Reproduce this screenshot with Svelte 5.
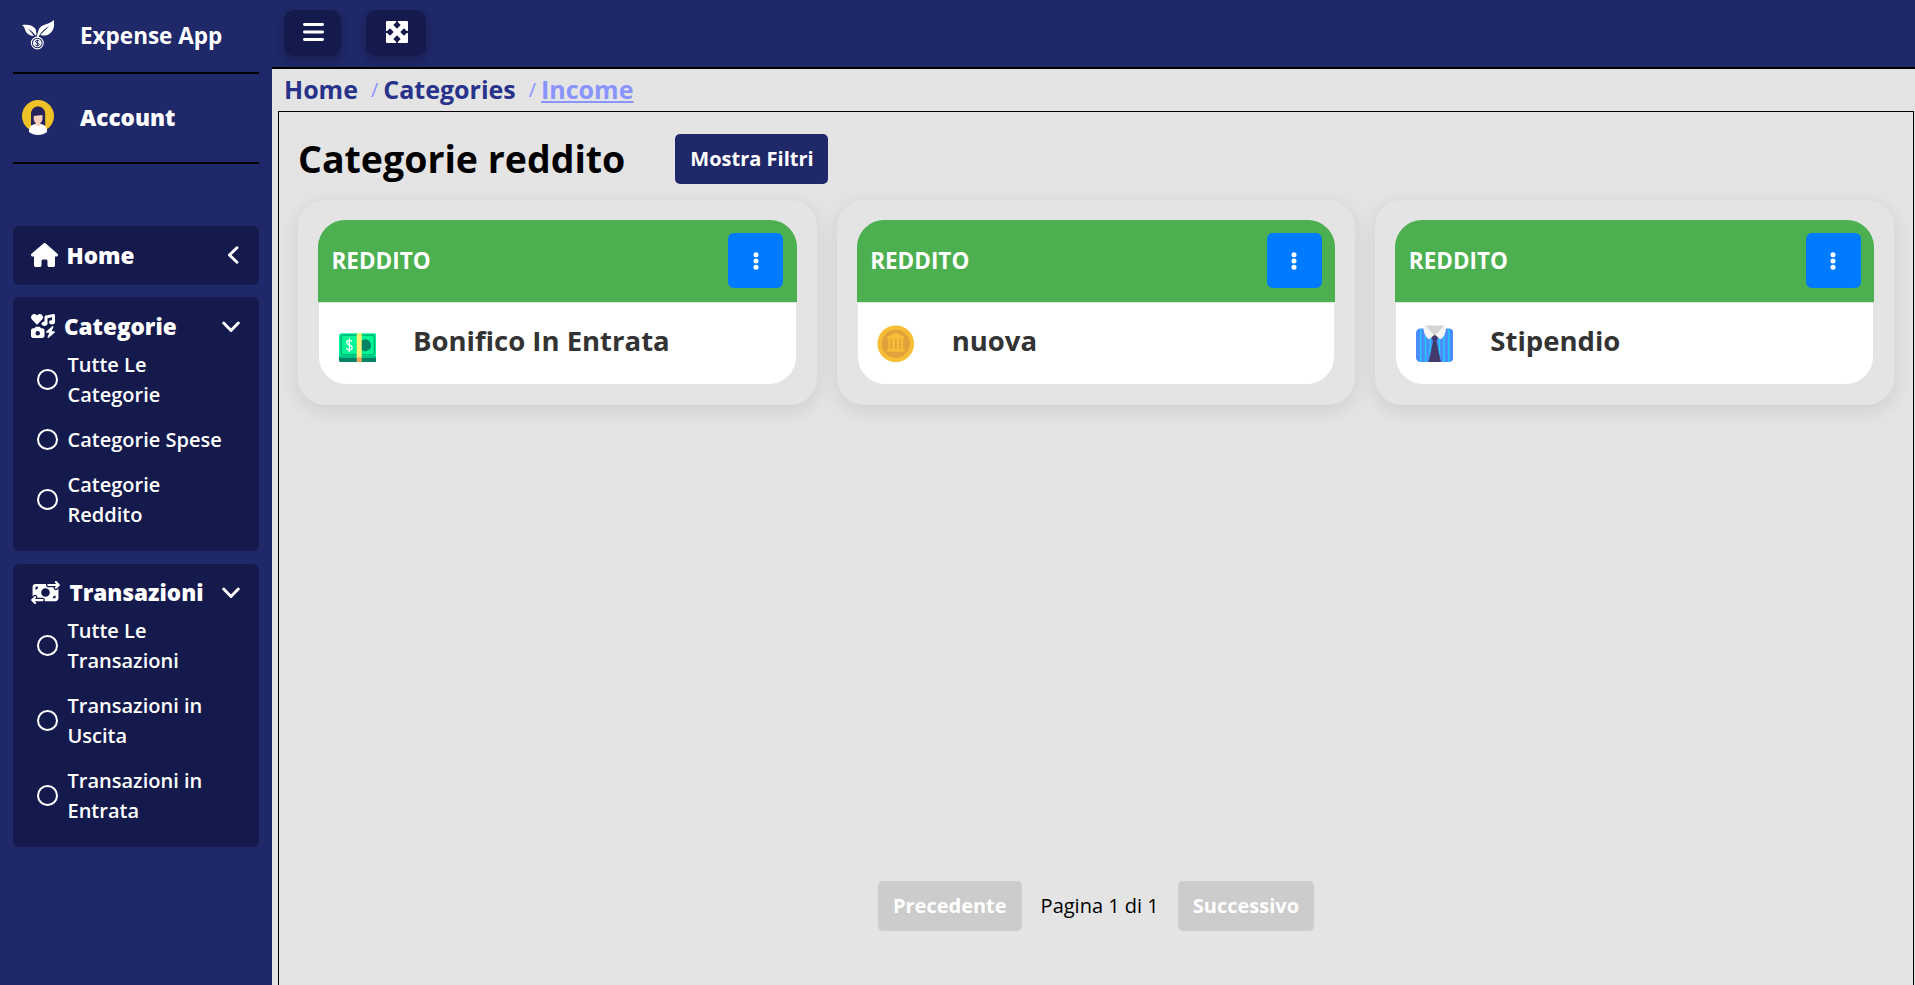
<script>
  const groups = [
    {
      title: 'Categorie',
      icon: 'icons',
      items: ['Tutte Le Categorie', 'Categorie Spese', 'Categorie Reddito']
    },
    {
      title: 'Transazioni',
      icon: 'transfer',
      items: ['Tutte Le Transazioni', 'Transazioni in Uscita', 'Transazioni in Entrata']
    }
  ];

  const cards = [
    { type: 'REDDITO', name: 'Bonifico In Entrata', icon: 'cash' },
    { type: 'REDDITO', name: 'nuova', icon: 'coin' },
    { type: 'REDDITO', name: 'Stipendio', icon: 'shirt' }
  ];
</script>

<div class="app">
  <aside class="sidebar">
    <div class="brand">
      <svg class="logo" viewBox="0 0 32 30">
        <path fill="#fff" d="M0 5C6 4 11 5 13.500 9C14.300 11 14.400 13 14.600 15L13.400 15.600C12 13 9 10.500 5.500 8.500C8 11 10 13 12 16C7 16 4 13 3 9.500C2.500 7.500 1.500 6 0 5Z" />
        <path fill="#fff" d="M32 0C33 8 30 14.500 23 15.500C21 15.800 19.500 15.500 18.500 15C21 12 24 9.500 27.500 6C23 8.500 19 12 16.300 17H14.700C15.500 14 16 11.500 17 9C19 4.500 27 4.500 32 0Z" />
        <circle cx="15.300" cy="23" r="5.900" fill="none" stroke="#fff" stroke-width="1.100" />
        <circle cx="15.300" cy="23" r="4.300" fill="#fff" />
        <path d="M17.300 21.200C16.300 20.100 13.400 20.200 13.400 21.700C13.400 23.200 17.300 22.600 17.300 24.300C17.300 25.800 14.300 26 13.200 24.700M15.300 19.600V26.500" fill="none" stroke="#1f2868" stroke-width="1" />
      </svg>
      <span>Expense App</span>
    </div>

    <div class="account">
      <svg class="avatar" viewBox="0 0 32 36">
        <circle cx="16" cy="16" r="16" fill="#efc327" />
        <path fill="#29235c" d="M9 25.500V14C9 4 23.200 4 23.200 14V25.500Z" />
        <path fill="#fff" d="M7 32C6.500 27 10 24.500 13.500 23.700H18.500C22 24.500 25.500 27 25 32C20 36 12 36 7 32Z" />
        <path fill="#fad0bd" d="M11.700 16L20.500 15V18.500C20.500 21 19 22.500 18.200 23V24.500C17.500 26.500 14.500 26.500 13.800 24.500V23C13 22.500 11.700 21 11.700 18.500Z" />
      </svg>
      <span>Account</span>
    </div>

    <nav>
      <section class="group home">
        <header>
          <svg class="ic-home" viewBox="0 0 576 512"><path fill="#fff" d="M575.8 255.5c0 18-15 32.1-32 32.1h-32l.7 160.2c0 2.700-.2 5.400-.5 8.100V472c0 22.100-17.900 40-40 40H456c-1.100 0-2.200 0-3.300-.1c-1.400 .1-2.800 .1-4.200 .1H416 392c-22.100 0-40-17.900-40-40V448 384c0-17.700-14.300-32-32-32H256c-17.700 0-32 14.300-32 32v64 24c0 22.100-17.900 40-40 40H160 128.100c-1.500 0-3-.1-4.500-.2c-1.200 .1-2.400 .2-3.600 .2H104c-22.100 0-40-17.900-40-40V360c0-.9 0-1.900 .1-2.800V287.600H32c-18 0-32-14-32-32.100c0-9 3-17 10-24L266.400 8c7-7 15-8 22-8s15 2 21 7L564.800 231.500c8 7 12 15 11 24z" /></svg>
          <span>Home</span>
          <svg class="chev left" viewBox="0 0 12 18"><path d="M10 1.700L2.400 9L10 16.300" /></svg>
        </header>
      </section>

      {#each groups as group}
        <section class="group {group.icon}">
          <header>
            {#if group.icon === 'icons'}
              <svg class="ic-icons" viewBox="0 0 512 512"><path fill="#fff" d="M500.3 7.300C507.700 13.300 512 22.400 512 32V176c0 26.500-28.700 48-64 48s-64-21.500-64-48s28.700-48 64-48V71L352 90.200V208c0 26.500-28.700 48-64 48s-64-21.500-64-48s28.700-48 64-48V64c0-15.300 10.800-28.400 25.700-31.400l160-32c9.400-1.900 19.100 .6 26.600 6.600zM74.700 304l11.800-17.800c5.900-8.900 15.900-14.200 26.600-14.200h61.700c10.700 0 20.700 5.300 26.600 14.200L213.300 304H240c26.500 0 48 21.500 48 48V464c0 26.500-21.500 48-48 48H48c-26.500 0-48-21.500-48-48V352c0-26.500 21.500-48 48-48H74.700zM192 408a48 48 0 1 0 -96 0 48 48 0 1 0 96 0zM478.700 278.300L440.300 368H496c6.700 0 12.600 4.100 15 10.400s.6 13.300-4.400 17.700l-128 112c-5.600 4.900-13.900 5.300-19.900 .9s-8.200-12.400-5.300-19.200L391.700 400H336c-6.700 0-12.600-4.100-15-10.400s-.6-13.300 4.400-17.700l128-112c5.600-4.900 13.900-5.300 19.900-.9s8.200 12.400 5.300 19.200zm-339-59.200c-6.500 6.500-17 6.500-23 0L19.900 119.200c-28-29-26.500-76.900 5-103.900c27-23.500 68.400-19 93.400 6.500l10 10.500 9.500-10.500c25-25.500 65.900-30 93.900-6.500c31 27 32.500 74.900 4.500 103.900l-96.400 99.900z" /></svg>
            {:else}
              <svg class="ic-transfer" viewBox="0 0 640 512"><path fill="#fff" d="M535 41c-9.400-9.400-9.400-24.600 0-33.900s24.600-9.400 33.900 0l64 64c4.500 4.500 7 10.600 7 17s-2.500 12.500-7 17l-64 64c-9.400 9.400-24.600 9.400-33.900 0s-9.400-24.600 0-33.900l23-23L384 112c-13.300 0-24-10.700-24-24s10.700-24 24-24l174.100 0L535 41zM105 377l-23 23L256 400c13.300 0 24 10.700 24 24s-10.700 24-24 24L81.900 448l23 23c9.400 9.400 9.400 24.600 0 33.900s-24.600 9.400-33.900 0L7 441c-4.500-4.500-7-10.600-7-17s2.500-12.500 7-17l64-64c9.400-9.400 24.600-9.400 33.900 0s9.400 24.600 0 33.900zM96 64H337.900c-3.700 7.200-5.900 15.300-5.900 24c0 28.700 23.300 52 52 52l117.400 0c-4 17 .6 35.500 13.800 48.800c20.300 20.300 53.200 20.300 73.500 0L608 169.500V384c0 35.300-28.700 64-64 64H302.100c3.700-7.200 5.900-15.300 5.900-24c0-28.700-23.300-52-52-52l-117.400 0c4-17-.6-35.500-13.800-48.800c-20.300-20.300-53.200-20.300-73.500 0L32 342.500V128c0-35.300 28.700-64 64-64zm64 64H96v64c35.300 0 64-28.700 64-64zM544 320c-35.300 0-64 28.700-64 64h64V320zM320 352a96 96 0 1 0 0-192 96 96 0 1 0 0 192z" /></svg>
            {/if}
            <span>{group.title}</span>
            <svg class="chev down" viewBox="0 0 18 12"><path d="M1.700 2L9 9.400L16.300 2" /></svg>
          </header>
          <ul>
            {#each group.items as item}
              <li><i></i><span>{item}</span></li>
            {/each}
          </ul>
        </section>
      {/each}
    </nav>
  </aside>

  <div class="content">
    <div class="topbar">
      <button class="tool menu" aria-label="Menu">
        <svg width="21" height="18" viewBox="0 0 21 18"><path d="M1.400 1.500H19.600M1.400 9H19.600M1.400 16.500H19.600" stroke="#fff" stroke-width="2.800" stroke-linecap="round" /></svg>
      </button>
      <button class="tool full" aria-label="Schermo intero">
        <svg width="22" height="22" viewBox="0 0 22 22">
          <rect width="22" height="22" rx="1" fill="#fff" />
          <path fill="#151a4d" d="M10.100 0H11.900V1.300L14.700 4L11 7.700L7.300 4L10.100 1.300ZM10.100 22H11.900V20.700L14.700 18L11 14.300L7.300 18L10.100 20.700ZM0 10.100V11.900H1.300L4 14.700L7.700 11L4 7.300L1.300 10.100ZM22 10.100V11.900H20.700L18 14.700L14.300 11L18 7.300L20.700 10.100Z" />
        </svg>
      </button>
    </div>

    <div class="crumbs">
      <b>Home</b><i>/</i><b>Categories</b><i>/</i><b class="current">Income</b>
    </div>

    <main>
      <div class="heading">
        <h1>Categorie reddito</h1>
        <button class="filter">Mostra Filtri</button>
      </div>

      <div class="cards">
        {#each cards as card}
          <article>
            <div class="head">
              <span>{card.type}</span>
              <button aria-label="Azioni">
                <svg width="6" height="18" viewBox="0 0 6 18" fill="#fff"><circle cx="3" cy="2.700" r="2.500" /><circle cx="3" cy="9" r="2.500" /><circle cx="3" cy="15.300" r="2.500" /></svg>
              </button>
            </div>
            <div class="body">
              {#if card.icon === 'cash'}
                <svg class="pic" viewBox="0 0 38 38">
                  <g transform="translate(0 4)">
                    <rect y="15" width="38" height="19" rx="2.500" fill="#008463" />
                    <rect y="4.300" width="38" height="25" rx="2.500" fill="#00f593" />
                    <rect x="2.200" y="6.300" width="33.600" height="20" rx="1.500" fill="none" stroke="#00a879" stroke-width="1.300" />
                    <rect y="27.700" width="38" height="1.300" fill="#00b47d" />
                    <circle cx="26.500" cy="16.500" r="6" fill="#008463" />
                    <path d="M13.200 13C12.200 10.800 7.800 11 7.800 13.700C7.800 16.700 13.400 15.500 13.400 18.900C13.400 21.900 8.300 22 7.400 19.400M10.500 9.500V23.300" fill="none" stroke="#fff" stroke-width="1.300" />
                    <rect x="18" y="4.300" width="5" height="25" fill="#fff176" />
                    <rect x="18" y="28.800" width="5" height="5.200" fill="#f4a460" />
                  </g>
                </svg>
              {:else if card.icon === 'coin'}
                <svg class="pic" viewBox="0 0 38 38">
                  <circle cx="19" cy="19" r="18.600" fill="#f6be36" />
                  <circle cx="19" cy="19" r="14.300" fill="#e3a13c" />
                  <path fill="#f6be36" d="M19 7.500L27.500 12V14H26.500V24.500H28V27H10V24.500H11.500V14H10.500V12Z" />
                  <path stroke="#e3a13c" stroke-width="1.600" d="M14.500 14V24.500M19 14V24.500M23.500 14V24.500" />
                </svg>
              {:else}
                <svg class="pic" viewBox="0 0 38 38">
                  <rect y="3.500" width="38" height="34" rx="4.500" fill="#4b8bfb" />
                  <path stroke="#25c9f7" stroke-width="1.600" d="M4.700 4V37.500M9.700 10V37.500M14.300 12V37.500M23.700 12V37.500M28.300 10V37.500M33.300 4V37.500" />
                  <path fill="#d5d5d5" d="M9 .5H29L19 13Z" />
                  <path fill="#f5f5f5" d="M9 0L19 10.800L13 14.500Q8 11 7.500 3Q8 .5 9 0ZM29 0L19 10.800L25 14.500Q30 11 30.500 3Q30 .5 29 0Z" />
                  <path fill="#433b6b" d="M19 10L22.300 12.500L20.700 16.500L25.300 37.500H12.700L17.300 16.500L15.700 12.500Z" />
                </svg>
              {/if}
              <h2>{card.name}</h2>
            </div>
          </article>
        {/each}
      </div>

      <div class="pager">
        <button disabled>Precedente</button>
        <span>Pagina 1 di 1</span>
        <button disabled>Successivo</button>
      </div>
    </main>
  </div>
</div>

<style>
  :global(body) { margin: 0; overflow: hidden; }
  * { box-sizing: border-box; }
  .app {
    display: flex;
    width: 100%;
    height: 985px;
    background: #e4e4e4;
    font-family: "Open Sans", sans-serif;
    font-size: 20px;
    line-height: 1.5;
    overflow: hidden;
  }
  button { font-family: inherit; border: 0; margin: 0; padding: 0; }
  svg { display: block; flex: none; }
  .sidebar { width: 272px; flex: none; padding: 0 13px; background: #1f2868; color: #fff; }
  .brand, .account {
    display: flex;
    align-items: center;
    padding-left: 9px;
    border-bottom: 2px solid #000;
    font-size: 22.5px;
    font-weight: 700;
  }
  .brand { height: 74px; padding-bottom: 2px; }
  .brand span, .account span { margin-left: 26px; white-space: nowrap; }
  .brand span { margin-top: 1px; }
  .account { height: 90px; font-weight: 800; }
  .logo { width: 32px; height: 30px; }
  .avatar { width: 32px; height: 36px; }
  nav { display: flex; flex-direction: column; gap: 12px; padding-top: 62px; }
  .group { padding: 10px 18px 21px; border-radius: 6px; background: #151a4d; }
  .group.home { height: 59px; }
  .group.transfer { margin-top: 1px; padding-top: 9px; }
  .group header { display: flex; align-items: center; height: 38px; font-size: 22.5px; font-weight: 800; }
  .group header span { margin-top: 1px; }
  .ic-home { width: 27px; height: 24px; margin-right: 8.5px; }
  .ic-icons { width: 24px; height: 24px; margin-right: 9px; }
  .ic-transfer { width: 29px; height: 23px; margin-right: 9.5px; }
  .chev { margin-left: auto; fill: none; stroke: #fff; stroke-width: 2.900; stroke-linecap: round; stroke-linejoin: round; }
  .left { width: 12px; height: 18px; margin-right: 2px; }
  .down { width: 18px; height: 12px; margin-right: 1px; margin-top: 2px; }
  ul { display: flex; flex-direction: column; gap: 15px; margin: 0; padding: 5px 0 0 6px; list-style: none; }
  li { display: flex; align-items: center; font-weight: 600; }
  li i { flex: none; width: 21px; height: 21px; margin: 0 9.500px 2px 0; border: 2px solid #fff; border-radius: 50%; }
  li span { width: 160px; }
  .content { flex: 1; min-width: 0; display: flex; flex-direction: column; }
  .topbar { display: flex; align-items: flex-start; gap: 25px; height: 69px; flex: none; padding: 10px 12px; background: #1f2868; border-bottom: 2px solid #000; }
  .tool { display: flex; align-items: center; justify-content: center; height: 46px; padding-bottom: 2px; border-radius: 10px; background: #151a4d; box-shadow: 0 4px 8px rgba(0, 0, 0, .2); }
  .menu { width: 57px; padding-left: 1px; }
  .full { width: 60px; padding-left: 2px; }
  .crumbs { display: flex; align-items: center; height: 42px; flex: none; padding-left: 12px; font-size: 25px; color: #27338b; }
  .crumbs b { font-weight: 700; }
  .crumbs i { margin: 0 5px 0 13px; font-size: 20px; font-style: normal; color: #8a94ff; }
  .crumbs .current { color: #8a94ff; text-decoration: underline; }
  main { flex: 1; display: flex; flex-direction: column; margin: 0 1px 0 6px; padding: 0 19px 54px; border: 1px solid #000; border-bottom: 0; }
  .heading { display: flex; align-items: center; gap: 50px; height: 88px; padding-top: 6px; }
  h1 { margin: 0 0 1px; font-size: 37.5px; line-height: 54px; font-weight: 700; }
  .filter, .pager button { height: 50px; padding: 0 15px 2px; border-radius: 5px; background: #1f2868; color: #fff; font-size: 20px; font-weight: 700; }
  .filter { padding-right: 14.5px; }
  .cards { display: grid; grid-template-columns: repeat(3, 1fr); gap: 20px; }
  article { height: 205px; padding: 20px; border-radius: 27px; box-shadow: 0 5px 20px rgba(0, 0, 0, .1); }
  .head { display: flex; justify-content: space-between; align-items: center; height: 82px; padding: 0 13.500px 1px 13.500px; border-radius: 27px 27px 0 0; background: #4caf50; color: #fff; font-size: 22.5px; font-weight: 700; }
  .head button { display: flex; align-items: center; justify-content: center; width: 55px; height: 55px; border-radius: 6px; background: #007bff; }
  .body { display: flex; align-items: center; height: 81px; margin: 1px 1px 0; padding-left: 19.500px; border-radius: 0 0 27px 27px; background: #fff; }
  .pic { width: 37.5px; height: 37.5px; }
  h2 { margin: 0 0 5px 37px; font-size: 27.5px; font-weight: 700; color: #333; }
  .pager { display: flex; align-items: center; justify-content: center; gap: 19px; margin-top: auto; }
  .pager span { padding-bottom: 1px; }
  .pager button { background: #ccc; }
</style>
